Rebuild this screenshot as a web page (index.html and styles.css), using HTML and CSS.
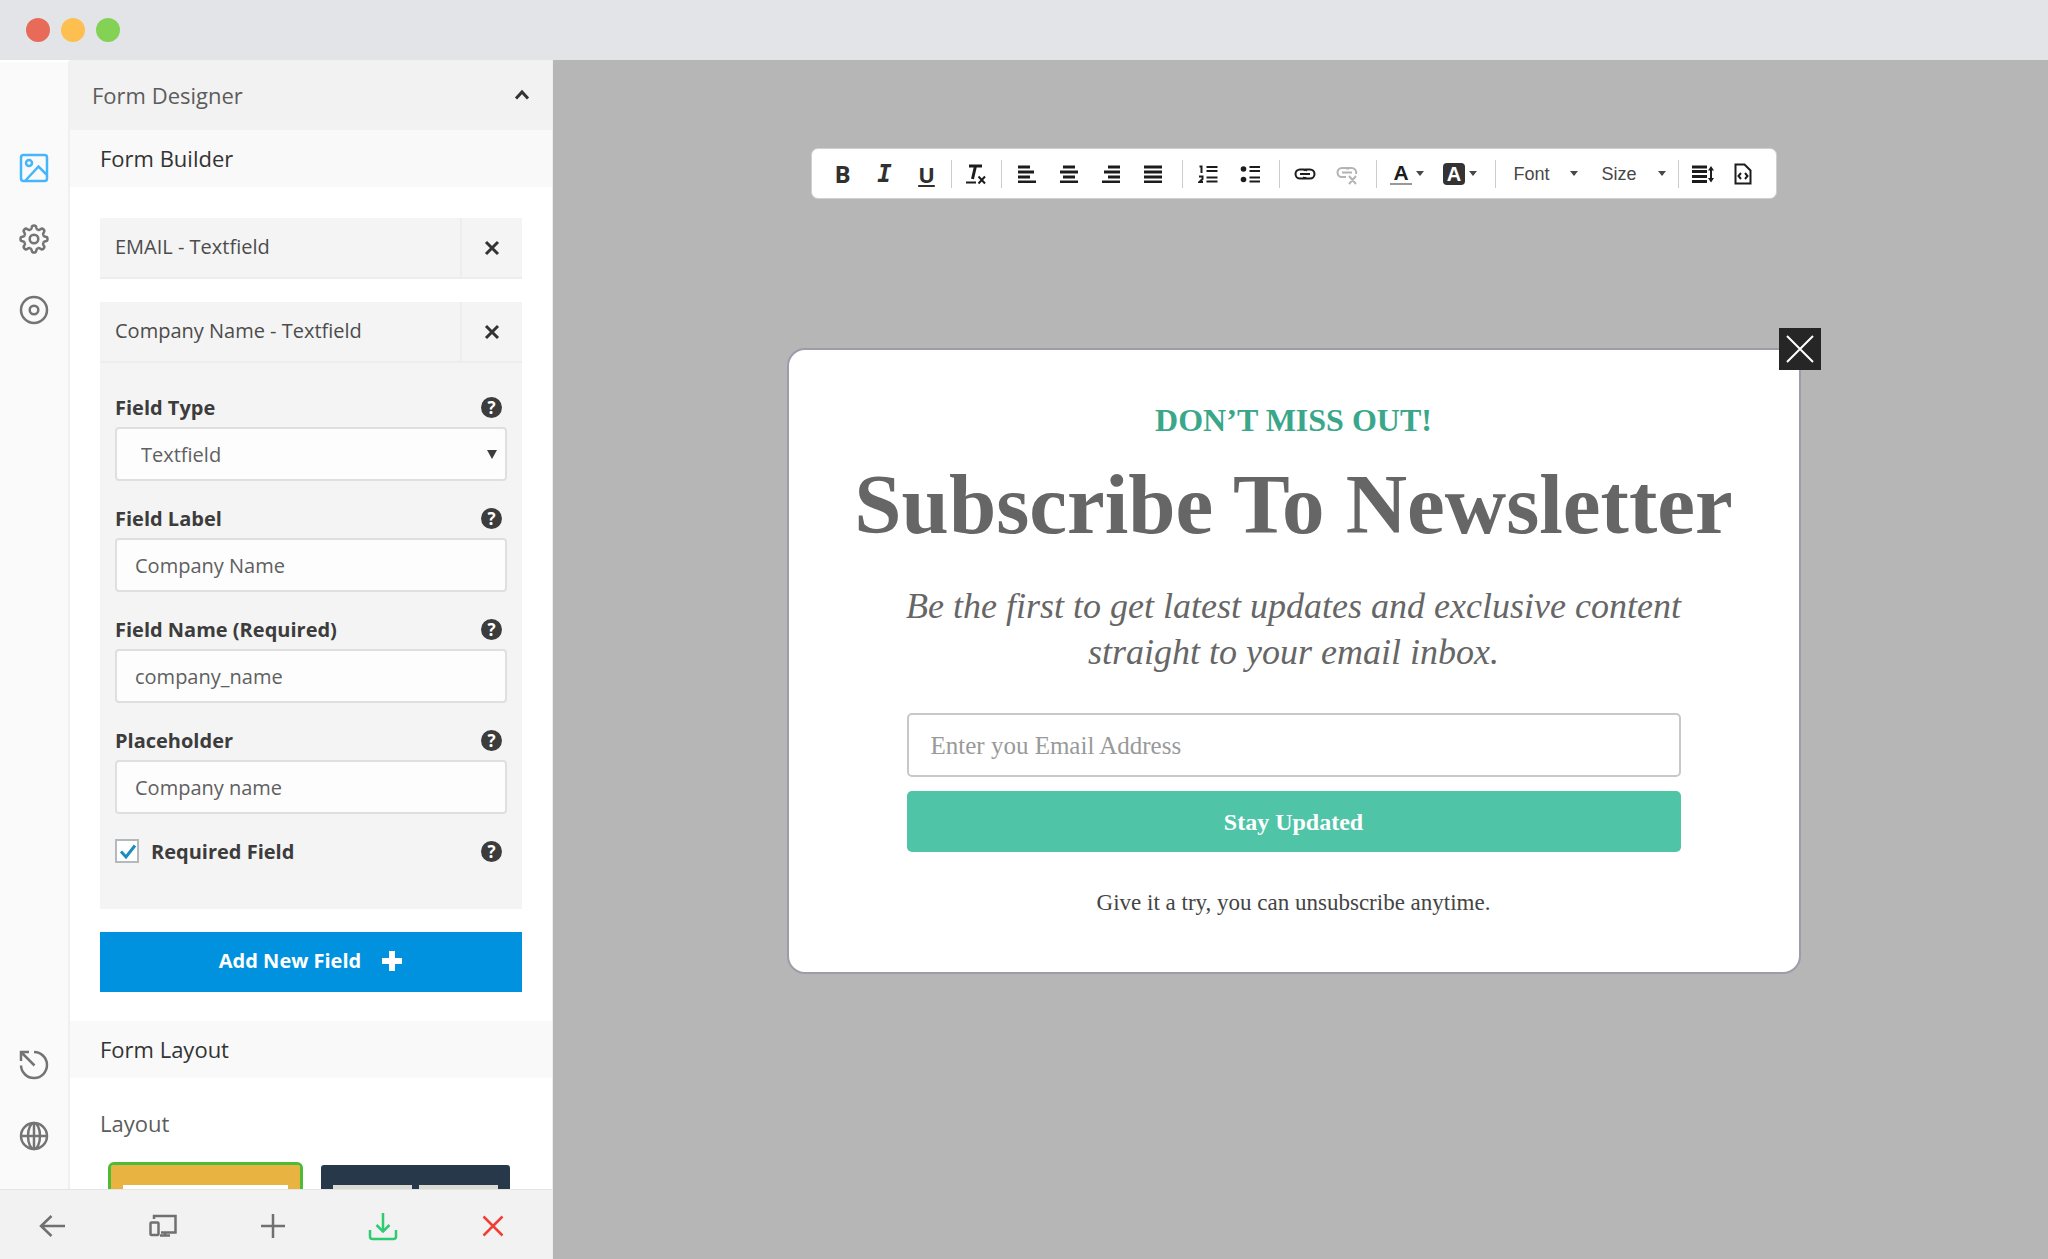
FILE: index.html
```html
<!DOCTYPE html>
<html lang="en">
<head>
    <meta charset="UTF-8">
    <meta name="viewport" content="width=device-width, initial-scale=1.0">
    <title>Form Designer</title>
    <link rel="stylesheet" href="styles.css">
</head>
<body>
    <header class="titlebar">
        <span class="dot red"></span>
        <span class="dot yellow"></span>
        <span class="dot green"></span>
    </header>

    <div class="app">
        <aside class="sidebar">
            <div class="sidebar-main">
                <nav class="rail">
                    <div class="rail-group">
                        <button class="rail-btn active" aria-label="Design">
                            <svg width="30" height="30" viewBox="0 0 30 30"><rect x="2" y="2" width="26" height="26" rx="2.5"/><circle cx="10" cy="10" r="3"/><path d="M6.500 27.500L19.500 13.500L27.500 21.500"/></svg>
                        </button>
                        <button class="rail-btn" aria-label="Settings">
                            <svg width="30" height="30" viewBox="0 0 30 30">
                                <defs><path id="tooth" d="M11.170 5.760C12.650 5.150 12.600 4.200 12.800 3.200Q13 1.500 15 1.500Q17 1.500 17.200 3.200C17.400 4.200 17.350 5.150 18.830 5.760"/></defs>
                                <use href="#tooth"/>
                                <use href="#tooth" transform="rotate(45 15 15)"/>
                                <use href="#tooth" transform="rotate(90 15 15)"/>
                                <use href="#tooth" transform="rotate(135 15 15)"/>
                                <use href="#tooth" transform="rotate(180 15 15)"/>
                                <use href="#tooth" transform="rotate(225 15 15)"/>
                                <use href="#tooth" transform="rotate(270 15 15)"/>
                                <use href="#tooth" transform="rotate(315 15 15)"/>
                                <circle cx="15" cy="15" r="4.300"/>
                            </svg>
                        </button>
                        <button class="rail-btn" aria-label="Target">
                            <svg width="30" height="30" viewBox="0 0 30 30"><circle cx="15" cy="15" r="13"/><circle cx="15" cy="15" r="4.300"/></svg>
                        </button>
                    </div>
                    <div class="rail-group">
                        <button class="rail-btn" aria-label="Timer">
                            <svg width="30" height="30" viewBox="0 0 30 30"><path d="M15 2A13 13 0 1 1 2 15.500M2 11V2H10M2.500 2.500L15.500 15.500"/></svg>
                        </button>
                        <button class="rail-btn" aria-label="Language">
                            <svg width="30" height="30" viewBox="0 0 30 30"><circle cx="15" cy="15" r="13"/><ellipse cx="15" cy="15" rx="6" ry="13"/><path d="M15 2V28M2 15H28"/></svg>
                        </button>
                    </div>
                </nav>

                <main class="panel">
                    <button class="panel-title">
                        Form Designer
                        <svg width="16" height="12" viewBox="0 0 16 12"><path d="M2 9.500L8 3L14 9.500"/></svg>
                    </button>

                    <h2 class="section-title">Form Builder</h2>
                    <div class="builder">
                        <div class="item">
                            <div class="item-head">
                                <span class="item-name">EMAIL - Textfield</span>
                                <button class="remove" aria-label="Remove"><svg width="18" height="18" viewBox="0 0 18 18"><path d="M3 3L15 15M15 3L3 15"/></svg></button>
                            </div>
                        </div>

                        <div class="item">
                            <div class="item-head">
                                <span class="item-name">Company Name - Textfield</span>
                                <button class="remove" aria-label="Remove"><svg width="18" height="18" viewBox="0 0 18 18"><path d="M3 3L15 15M15 3L3 15"/></svg></button>
                            </div>
                            <div class="item-body">
                                <div class="field">
                                    <div class="field-head"><label for="field-type">Field Type</label><span class="help">?</span></div>
                                    <div class="select-box">
                                        <select id="field-type" class="control"><option>Textfield</option></select>
                                    </div>
                                </div>
                                <div class="field">
                                    <div class="field-head"><label for="field-label">Field Label</label><span class="help">?</span></div>
                                    <input id="field-label" class="control" type="text" value="Company Name">
                                </div>
                                <div class="field">
                                    <div class="field-head"><label for="field-name">Field Name (Required)</label><span class="help">?</span></div>
                                    <input id="field-name" class="control" type="text" value="company_name">
                                </div>
                                <div class="field">
                                    <div class="field-head"><label for="field-placeholder">Placeholder</label><span class="help">?</span></div>
                                    <input id="field-placeholder" class="control" type="text" value="Company name">
                                </div>
                                <div class="field-head">
                                    <span class="check">
                                        <input id="required" type="checkbox" checked>
                                        <svg width="24" height="24" viewBox="0 0 24 24"><path d="M6 12.500L11 18L20 6.500"/></svg>
                                    </span>
                                    <label for="required">Required Field</label><span class="help">?</span>
                                </div>
                            </div>
                        </div>

                        <button class="add-btn">Add New Field
                            <svg width="22" height="22" viewBox="0 0 22 22"><path d="M11 1V21M1 11H21"/></svg>
                        </button>
                    </div>

                    <h2 class="section-title">Form Layout</h2>
                    <div class="layouts">
                        <h3>Layout</h3>
                        <div class="thumbs">
                            <button class="thumb orange selected" aria-label="One column"><span></span></button>
                            <button class="thumb navy" aria-label="Two columns"><span></span><span></span></button>
                        </div>
                    </div>
                </main>
            </div>

            <footer class="actions">
                <button aria-label="Back"><svg width="30" height="30" viewBox="0 0 30 30"><path d="M27 15H3M13.500 5L3 15L13.500 25"/></svg></button>
                <button aria-label="Devices"><svg width="30" height="30" viewBox="0 0 30 30"><path d="M6 8V5H27.500V21.500H13M17 22V24M12 24.500H22"/><rect x="2.500" y="11.500" width="8" height="12.500" rx="1"/></svg></button>
                <button aria-label="Add"><svg width="30" height="30" viewBox="0 0 30 30"><path d="M15 3V27M3 15H27"/></svg></button>
                <button class="save" aria-label="Save"><svg width="30" height="30" viewBox="0 0 30 30"><path d="M15 2V20M8.500 14L15 20.500L21.500 14M2 19V25.500Q2 28 4.500 28H25.500Q28 28 28 25.500V19"/></svg></button>
                <button class="close" aria-label="Close"><svg width="30" height="30" viewBox="0 0 30 30"><path d="M5.500 5.500L24.500 24.500M24.500 5.500L5.500 24.500"/></svg></button>
            </footer>
        </aside>

        <section class="stage">
            <div class="toolbar">
                <div class="group first">
                    <button class="bold">B</button>
                    <button class="italic">I</button>
                    <button class="underline">U</button>
                </div>
                <div class="group single">
                    <button class="clear" aria-label="Clear formatting"><svg width="22" height="22" viewBox="0 0 22 22"><path d="M4 3H17M10.500 3L7.500 16"/><path class="thin" d="M1 19.500H11M13.500 13.500L20 20.500M20 13.500L13.500 20.500"/></svg></button>
                </div>
                <div class="group">
                    <button aria-label="Align left"><svg width="18" height="18" viewBox="0 0 18 18"><path d="M0 2H12M0 7H16M0 12H12M0 17H18"/></svg></button>
                    <button aria-label="Align center"><svg width="18" height="18" viewBox="0 0 18 18"><path d="M3 2H15M0 7H18M3 12H15M0 17H18"/></svg></button>
                    <button aria-label="Align right"><svg width="18" height="18" viewBox="0 0 18 18"><path d="M6 2H18M2 7H18M6 12H18M0 17H18"/></svg></button>
                    <button aria-label="Justify"><svg width="18" height="18" viewBox="0 0 18 18"><path d="M0 2H18M0 7H18M0 12H18M0 17H18"/></svg></button>
                </div>
                <div class="group">
                    <button aria-label="Numbered list"><svg class="thin" width="20" height="20" viewBox="0 0 20 20"><path d="M1.500 2.500H3.500V9M1 12.500H4.500V15L1.500 18H5M8.500 3H19.500M8.500 7H19.500M8.500 13.500H19.500M8.500 17.500H19.500"/></svg></button>
                    <button aria-label="Bullet list"><svg class="thin" width="20" height="20" viewBox="0 0 20 20"><circle class="solid" cx="3.500" cy="5" r="2.800"/><circle class="solid" cx="3.500" cy="15.500" r="2.800"/><path d="M9.500 3H20M9.500 7H20M9.500 13.500H20M9.500 17.500H20"/></svg></button>
                </div>
                <div class="group">
                    <button aria-label="Link"><svg class="thin" width="22" height="20" viewBox="0 0 22 20"><path d="M12.500 13.500A4.500 4.500 0 0 1 10 14.500H6A4.500 4.500 0 0 1 6 5.500H10A4.500 4.500 0 0 1 13 6.800M9.500 6.500A4.500 4.500 0 0 1 12 5.500H16A4.500 4.500 0 0 1 16 14.500H12A4.500 4.500 0 0 1 9 13.200M6 10H16"/></svg></button>
                    <button class="disabled" aria-label="Unlink" disabled><svg class="thin" width="22" height="22" viewBox="0 0 22 22"><path d="M10 14H6A4.500 4.500 0 0 1 6 5H10A4.500 4.500 0 0 1 13 6.300M9.500 6A4.500 4.500 0 0 1 12 5H16A4.500 4.500 0 0 1 20 11M6 9.500H16M13 13L20 21M20 13L13 21"/></svg></button>
                </div>
                <div class="group">
                    <button class="wide"><span class="text-color">A</span><i class="caret"></i></button>
                    <button class="wide"><span class="bg-color">A</span><i class="caret"></i></button>
                </div>
                <div class="group combos">
                    <div class="combo"><select aria-label="Font"><option>Font</option></select><i class="caret"></i></div>
                    <div class="combo"><select aria-label="Size"><option>Size</option></select><i class="caret"></i></div>
                </div>
                <div class="group last">
                    <button aria-label="Line height"><svg width="22" height="18" viewBox="0 0 22 18"><path d="M0 2H15M0 6.500H15M0 11.500H15M0 16.500H15"/><path class="thin" d="M19 3V16"/><path class="solid" d="M16 5.500L19 1L22 5.500ZM16 13L19 17.500L22 13Z"/></svg></button>
                    <button aria-label="Source"><svg class="thin" width="18" height="22" viewBox="0 0 18 22"><path d="M1.500 1.500H10.500L16.500 7.500V20.500H1.500ZM7 10L4.500 13L7 16M11 10L13.500 13L11 16"/></svg></button>
                </div>
            </div>

            <div class="modal">
                <button class="modal-close" aria-label="Close"><svg width="42" height="42" viewBox="0 0 42 42"><path d="M8 8L34 34M34 8L8 34"/></svg></button>
                <p class="kicker">DON’T MISS OUT!</p>
                <h1>Subscribe To Newsletter</h1>
                <p class="lead">Be the first to get latest updates and exclusive content straight to your email inbox.</p>
                <form class="signup">
                    <input type="email" aria-label="Email" placeholder="Enter you Email Address">
                    <button type="button">Stay Updated</button>
                </form>
                <p class="note">Give it a try, you can unsubscribe anytime.</p>
            </div>
        </section>
    </div>
</body>
</html>
```

FILE: styles.css
```css
* {
    box-sizing: border-box;
}

body {
    margin: 0;
    height: 100vh;
    display: flex;
    flex-direction: column;
    overflow: hidden;
    font-family: "Open Sans", "Noto Sans", sans-serif;
    font-size: 20px;
    color: #444;
}

h1, h2, h3, p {
    margin: 0;
}

button {
    padding: 0;
    border: 0;
    background: none;
    color: inherit;
    font: inherit;
    cursor: pointer;
}

svg {
    display: block;
    fill: none;
    stroke: currentColor;
    stroke-width: 2;
}

/* window bar */
.titlebar {
    flex: none;
    display: flex;
    align-items: center;
    gap: 11px;
    height: 60px;
    padding-left: 26px;
    background: #e2e4e8;
}

.dot {
    width: 24px;
    height: 24px;
    border-radius: 50%;
}

.red { background: #e86b5a; }
.yellow { background: #fdbf4f; }
.green { background: #83d255; }

.app {
    flex: 1;
    display: flex;
    min-height: 0;
}

/* sidebar */
.sidebar {
    flex: none;
    display: flex;
    flex-direction: column;
    width: 553px;
    background: #fff;
    border-right: 1px solid #ededed;
}

.sidebar-main {
    flex: 1;
    display: flex;
    min-height: 0;
}

.rail {
    flex: none;
    display: flex;
    flex-direction: column;
    justify-content: space-between;
    width: 70px;
    padding: 70px 0 18px;
    background: #fafafa;
    border-top: 2px solid #fff;
    border-right: 2px solid #f0f0f0;
}

.rail-btn {
    display: flex;
    align-items: center;
    justify-content: center;
    width: 100%;
    height: 71px;
    color: #747474;
}

.rail-btn svg {
    stroke-width: 2.5;
}

.rail-btn.active {
    color: #45b6fb;
}

.panel {
    flex: 1;
    overflow: hidden;
}

.panel-title {
    display: flex;
    align-items: center;
    justify-content: space-between;
    width: 100%;
    height: 70px;
    padding: 0 22px;
    background: #f2f2f2;
    color: #5c5c5c;
    font-size: 22px;
}

.panel-title svg {
    color: #333;
    stroke-width: 3;
}

.section-title {
    padding: 0 30px;
    background: #f9f9f9;
    color: #333;
    font-size: 22px;
    font-weight: 400;
    line-height: 57px;
}

.builder {
    padding: 31px 30px 29px;
}

.item {
    margin-bottom: 23px;
    background: #f4f4f4;
}

.item-head {
    display: flex;
    height: 61px;
    border-bottom: 2px solid #ededed;
}

.item-name {
    flex: 1;
    padding-left: 15px;
    line-height: 58px;
    color: #4c4c4c;
}

.remove {
    display: flex;
    align-items: center;
    justify-content: center;
    width: 62px;
    border-left: 2px solid #ededed;
    color: #333;
}

.remove svg {
    stroke-width: 3;
}

.item-body {
    padding: 24px 15px 38px;
}

.field {
    margin-bottom: 17px;
}

.field-head {
    display: flex;
    align-items: center;
    height: 40px;
    padding-right: 5px;
    color: #3c3c3c;
    font-weight: 700;
}

.help {
    width: 21px;
    height: 21px;
    margin-left: auto;
    border-radius: 50%;
    background: #3c3c3c;
    color: #fff;
    font-size: 17px;
    line-height: 21px;
    text-align: center;
}

.control {
    display: block;
    width: 100%;
    height: 54px;
    padding: 0 18px;
    border: 2px solid #dfdfdf;
    border-radius: 4px;
    background: #fdfdfd;
    color: #606060;
    font: inherit;
    appearance: none;
}

.select-box {
    position: relative;
}

.select-box .control {
    padding-left: 24px;
}

.select-box::after {
    content: "";
    position: absolute;
    top: 23px;
    right: 10px;
    border: 5px solid transparent;
    border-top: 9px solid #3c3c3c;
    border-bottom: 0;
}

.check {
    position: relative;
    width: 24px;
    height: 24px;
    margin-right: 12px;
}

.check input {
    display: block;
    width: 24px;
    height: 24px;
    margin: 0;
    border: 2px solid #b4b9be;
    background: #fff;
    appearance: none;
}

.check svg {
    position: absolute;
    top: 0;
    left: 0;
    color: #1e8cbe;
    stroke-width: 3;
    pointer-events: none;
}

.check input:not(:checked) + svg {
    display: none;
}

.add-btn {
    display: flex;
    align-items: center;
    justify-content: center;
    gap: 20px;
    width: 100%;
    height: 60px;
    padding-bottom: 3px;
    background: #0092df;
    color: #fff;
    font-weight: 700;
}

.add-btn svg {
    stroke-width: 6;
}

.layouts {
    padding: 30px 38px;
}

.layouts h3 {
    margin: 0 0 24px -8px;
    color: #5c5c5c;
    font-size: 22px;
    font-weight: 400;
    line-height: 30px;
}

.thumbs {
    display: flex;
    gap: 15px;
}

.thumb {
    display: flex;
    gap: 7px;
    width: 195px;
    height: 150px;
    padding: 20px 12px 12px;
    border: 3px solid transparent;
    border-radius: 6px;
    background-clip: padding-box;
}

.thumb span {
    flex: 1;
    height: 100%;
}

.thumb.selected {
    border-color: #4cbb35;
}

.orange { background-color: #e8b341; }
.orange span { background: #fff; }
.navy { background-color: #263849; }
.navy span { background: #dadad4; }

.actions {
    flex: none;
    display: flex;
    height: 70px;
    padding-right: 2px;
    border-top: 1px solid #e4e4e4;
    background: #f2f2f2;
    color: #707070;
}

.actions button {
    flex: 1;
    display: flex;
    align-items: center;
    justify-content: center;
    padding: 3px 4px 0 0;
}

.actions svg {
    stroke-width: 2.5;
}

.actions .save { color: #2ecc71; }
.actions .close { color: #ee4036; }

/* canvas */
.stage {
    flex: 1;
    display: flex;
    flex-direction: column;
    align-items: center;
    padding: 88px 14px 0 0;
    background: #b6b6b6;
}

.toolbar {
    display: flex;
    align-items: center;
    height: 51px;
    margin-bottom: 149px;
    border: 1px solid #d0d0d0;
    border-radius: 7px;
    background: #fff;
    color: #1c1c1c;
    font-family: "Liberation Sans", Arial, sans-serif;
}

.group {
    display: flex;
    align-items: center;
    height: 28px;
    padding: 0 8px 0 4px;
    border-right: 1px solid #ccc;
}

.group.first { padding: 0 3px 0 10px; }
.group.single { padding: 0 4px 0 3px; }
.group.last { padding: 0 13px 0 4px; border-right: 0; }

.toolbar button {
    display: flex;
    align-items: center;
    justify-content: center;
    width: 42px;
    height: 28px;
}

.toolbar .wide {
    gap: 4px;
    width: 53px;
}

.toolbar .last button { width: 40px; }

.toolbar svg { stroke-width: 3; }
.toolbar .thin { stroke-width: 2; }
.toolbar .solid { fill: currentColor; stroke: none; }
.toolbar .disabled { color: #b4b4b4; }

.toolbar .bold,
.toolbar .italic,
.toolbar .underline {
    color: #303030;
    font-family: "Open Sans", sans-serif;
    font-size: 24px;
    font-weight: 700;
    line-height: 28px;
}

.toolbar .italic {
    font-family: "DejaVu Sans Mono", monospace;
    font-style: italic;
}

.toolbar .underline {
    font-size: 22px;
    text-decoration: underline;
    text-decoration-thickness: 2px;
    text-underline-offset: 2px;
}

.caret {
    border: 4px solid transparent;
    border-top: 5px solid #484848;
    border-bottom: 0;
    pointer-events: none;
}

.text-color {
    width: 22px;
    border-bottom: 2px solid #999;
    font-size: 21px;
    font-weight: 700;
    line-height: 20px;
}

.bg-color {
    width: 22px;
    height: 22px;
    border-radius: 4px;
    background: #333;
    color: #fff;
    font-size: 20px;
    font-weight: 700;
    line-height: 22px;
}

.combos {
    gap: 24px;
    padding: 0 12px 0 18px;
}

.combo {
    display: flex;
    align-items: center;
    gap: 19px;
}

.combo select {
    width: 37px;
    padding: 0;
    border: 0;
    background: none;
    color: #474747;
    font: 18px "Liberation Sans", Arial, sans-serif;
    appearance: none;
}

/* popup preview */
.modal {
    position: relative;
    width: 1014px;
    max-width: 100%;
    padding: 50px 60px 54px;
    border: 2px solid #9d9caa;
    border-radius: 18px;
    background: #fff;
    font-family: "Palatino Linotype", "Liberation Serif", serif;
    text-align: center;
}

.modal-close {
    position: absolute;
    top: -22px;
    right: -22px;
    width: 42px;
    height: 42px;
    background: #262626;
    color: #fff;
}

.kicker {
    color: #3aa78a;
    font-size: 32px;
    font-weight: 700;
    line-height: 40px;
}

.modal h1 {
    margin-top: 14px;
    color: #666;
    font-size: 85px;
    line-height: 100px;
}

.lead {
    margin: 29px 50px 38px;
    color: #666;
    font-size: 36px;
    font-style: italic;
    line-height: 46px;
}

.signup {
    display: flex;
    flex-direction: column;
    gap: 14px;
    margin: 0 58px;
}

.signup input {
    height: 64px;
    padding: 2px 22px 0;
    border: 2px solid #c8c8c8;
    border-radius: 5px;
    background: #fff;
    font-family: inherit;
    font-size: 25px;
}

.signup input::placeholder {
    color: #999;
}

.signup button {
    height: 61px;
    padding-top: 2px;
    border-radius: 5px;
    background: #4fc4a7;
    color: #fff;
    font-size: 24px;
    font-weight: 700;
}

.note {
    margin-top: 36px;
    color: #444;
    font-size: 23px;
    line-height: 30px;
}
```
